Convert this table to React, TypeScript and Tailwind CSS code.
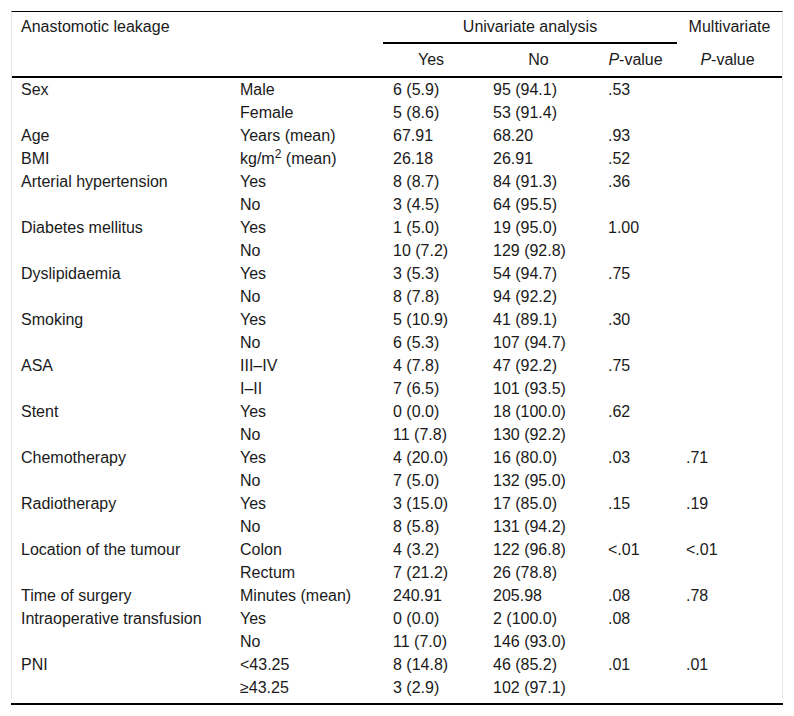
import React from "react";

type Row = [React.ReactNode, React.ReactNode, string, string, string, string];

const rows: Row[] = [
  ["Sex", "Male", "6 (5.9)", "95 (94.1)", ".53", ""],
  ["", "Female", "5 (8.6)", "53 (91.4)", "", ""],
  ["Age", "Years (mean)", "67.91", "68.20", ".93", ""],
  [
    "BMI",
    <span>
      kg/m<sup>2</sup> (mean)
    </span>,
    "26.18",
    "26.91",
    ".52",
    "",
  ],
  ["Arterial hypertension", "Yes", "8 (8.7)", "84 (91.3)", ".36", ""],
  ["", "No", "3 (4.5)", "64 (95.5)", "", ""],
  ["Diabetes mellitus", "Yes", "1 (5.0)", "19 (95.0)", "1.00", ""],
  ["", "No", "10 (7.2)", "129 (92.8)", "", ""],
  ["Dyslipidaemia", "Yes", "3 (5.3)", "54 (94.7)", ".75", ""],
  ["", "No", "8 (7.8)", "94 (92.2)", "", ""],
  ["Smoking", "Yes", "5 (10.9)", "41 (89.1)", ".30", ""],
  ["", "No", "6 (5.3)", "107 (94.7)", "", ""],
  ["ASA", "III–IV", "4 (7.8)", "47 (92.2)", ".75", ""],
  ["", "I–II", "7 (6.5)", "101 (93.5)", "", ""],
  ["Stent", "Yes", "0 (0.0)", "18 (100.0)", ".62", ""],
  ["", "No", "11 (7.8)", "130 (92.2)", "", ""],
  ["Chemotherapy", "Yes", "4 (20.0)", "16 (80.0)", ".03", ".71"],
  ["", "No", "7 (5.0)", "132 (95.0)", "", ""],
  ["Radiotherapy", "Yes", "3 (15.0)", "17 (85.0)", ".15", ".19"],
  ["", "No", "8 (5.8)", "131 (94.2)", "", ""],
  ["Location of the tumour", "Colon", "4 (3.2)", "122 (96.8)", "<.01", "<.01"],
  ["", "Rectum", "7 (21.2)", "26 (78.8)", "", ""],
  ["Time of surgery", "Minutes (mean)", "240.91", "205.98", ".08", ".78"],
  ["Intraoperative transfusion", "Yes", "0 (0.0)", "2 (100.0)", ".08", ""],
  ["", "No", "11 (7.0)", "146 (93.0)", "", ""],
  ["PNI", "<43.25", "8 (14.8)", "46 (85.2)", ".01", ".01"],
  ["", "≥43.25", "3 (2.9)", "102 (97.1)", "", ""],
];

const grid = "grid grid-cols-[218px_153px_100px_115px_79px_105px]";

export default function App() {
  return (
    <div className="w-[794px] h-[716px] bg-white pt-[11px] px-[11px] font-['Liberation_Sans',Arial,sans-serif] text-[16px] text-[#1a1a1a]">
      <div className="w-[772px] border-t border-t-black border-x border-x-[#e6e6e6]">
        {/* Header */}
        <div className={`${grid} border-b-2 border-black`}>
          <div className="h-[32px] pb-[2px] pl-[9px] flex items-center">Anastomotic leakage</div>
          <div className="h-[32px]"></div>
          <div className="col-span-3 h-[32px] border-b-2 border-black flex items-center justify-center">
            Univariate analysis
          </div>
          <div className="h-[32px] pb-[2px] flex items-center justify-center">Multivariate</div>
          <div className="h-[32px]"></div>
          <div className="h-[32px]"></div>
          <div className="h-[32px] pr-[4px] flex items-center justify-center">Yes</div>
          <div className="h-[32px] pr-[4px] flex items-center justify-center">No</div>
          <div className="h-[32px] pr-[4px] flex items-center justify-center">
            <span>
              <i>P</i>-value
            </span>
          </div>
          <div className="h-[32px] pr-[4px] flex items-center justify-center">
            <span>
              <i>P</i>-value
            </span>
          </div>
        </div>
        {/* Body */}
        {rows.map((r, i) => (
          <div key={i} className={`${grid} h-[23px] leading-[23px]`}>
            <div className="pl-[9px] whitespace-nowrap">{r[0]}</div>
            <div className="pl-[10px] whitespace-nowrap">{r[1]}</div>
            <div className="pl-[10px] whitespace-nowrap">{r[2]}</div>
            <div className="pl-[10px] whitespace-nowrap">{r[3]}</div>
            <div className="pl-[10px] whitespace-nowrap">{r[4]}</div>
            <div className="pl-[9px] whitespace-nowrap">{r[5]}</div>
          </div>
        ))}
      </div>
      <div className="w-[772px] mt-[4px] h-[2px] bg-black"></div>
    </div>
  );
}
